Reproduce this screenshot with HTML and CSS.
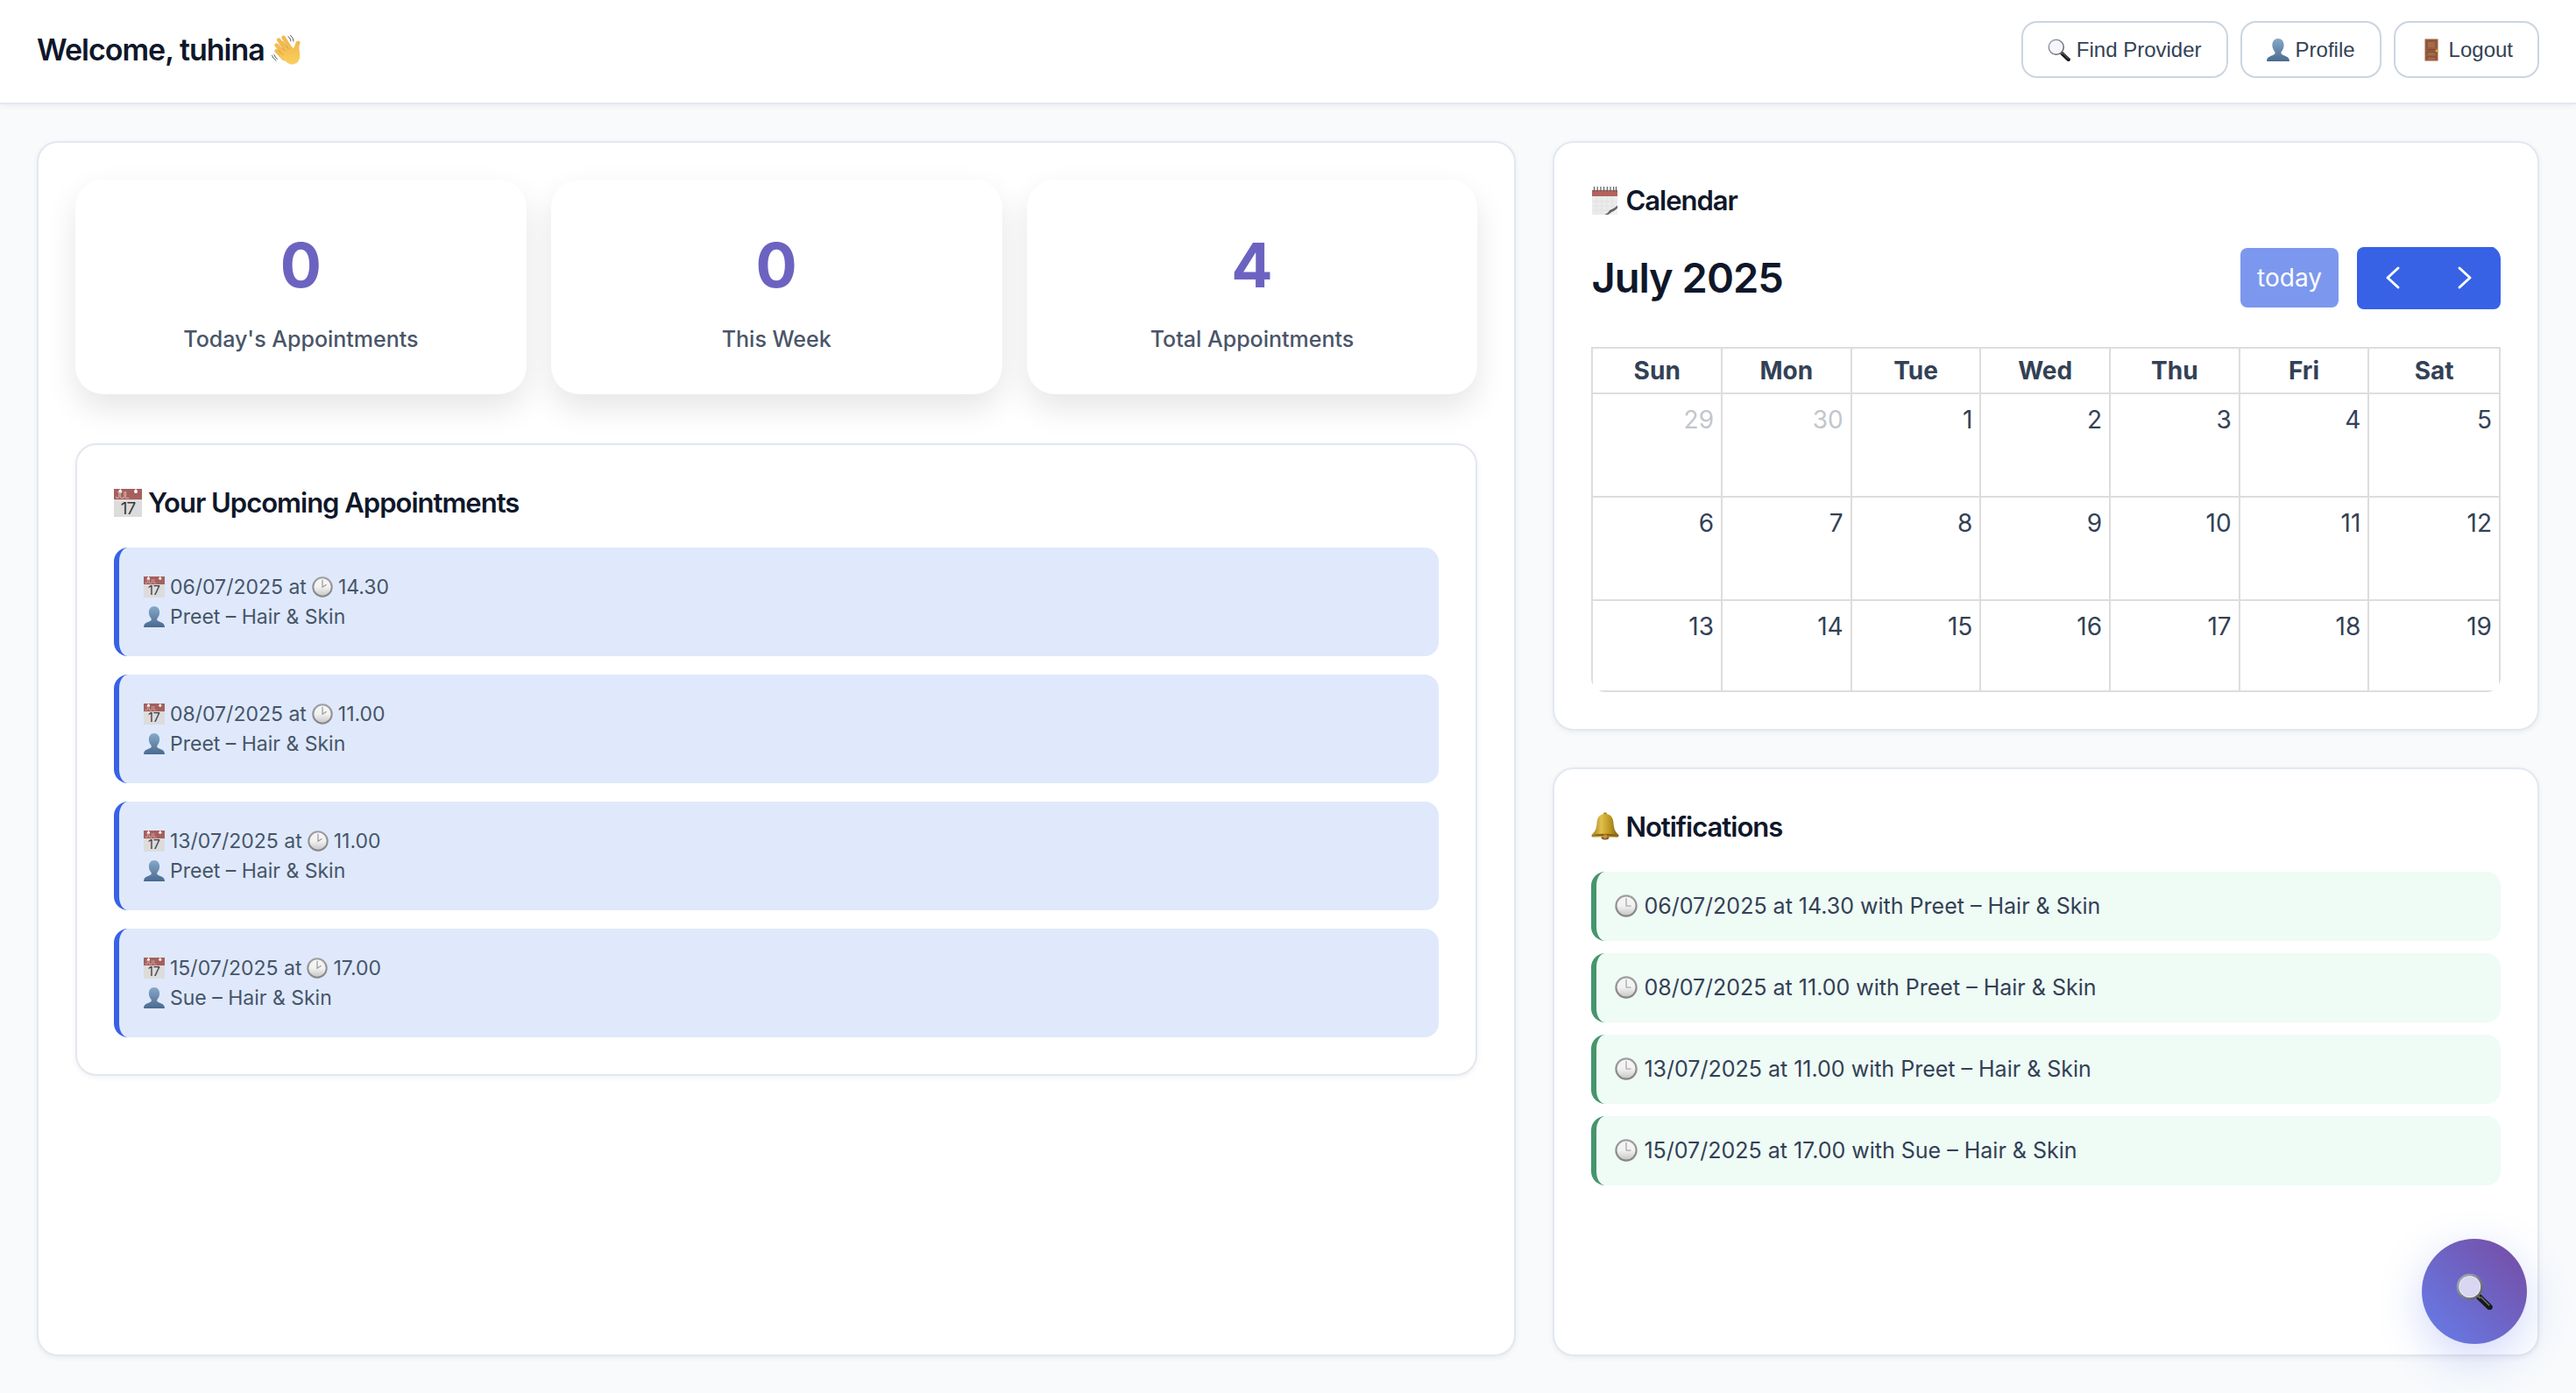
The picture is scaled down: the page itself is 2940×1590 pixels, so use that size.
FILE: index.html
```html
<!DOCTYPE html>
<html lang="en">
<head>
<meta charset="utf-8">
<meta name="viewport" content="width=device-width, initial-scale=1">
<title>Dashboard</title>
<link rel="stylesheet" href="styles.css">
</head>
<body>
<svg class="defs" aria-hidden="true">
  <defs>
    <linearGradient id="skin" x1="0" y1="0" x2="0" y2="1"><stop offset="0" stop-color="#f0b74c"/><stop offset="1" stop-color="#fbcf5e"/></linearGradient>
    <linearGradient id="person-fill" x1="0" y1="0" x2="0" y2="1"><stop offset="0" stop-color="#86a9c8"/><stop offset="1" stop-color="#4a6a90"/></linearGradient>
    <linearGradient id="bell-fill" x1="0" y1="0" x2="1" y2="0"><stop offset="0" stop-color="#9a7a1c"/><stop offset=".35" stop-color="#e3c04c"/><stop offset=".7" stop-color="#b8921f"/><stop offset="1" stop-color="#7d6010"/></linearGradient>
    <linearGradient id="clock-face" x1="0" y1="0" x2="0" y2="1"><stop offset="0" stop-color="#f6f6f6"/><stop offset=".5" stop-color="#f2f2f2"/><stop offset="1" stop-color="#c4c4c4"/></linearGradient>
    <linearGradient id="clock-rim" x1="0" y1="0" x2="0" y2="1"><stop offset="0" stop-color="#a0a0a0"/><stop offset="1" stop-color="#858585"/></linearGradient>
    <linearGradient id="rim" x1="0" y1="0" x2="1" y2="1"><stop offset="0" stop-color="#9fb0bf"/><stop offset="1" stop-color="#5b5b58"/></linearGradient>
    <symbol id="i-wave" viewBox="0 0 36 36">
      <g fill="none" stroke="#55585c" stroke-width="1" stroke-linecap="round"><path d="M20 2.500q2.500 2 3 5.500M22.500 1.200q3.300 2.800 3.600 6.800"/><path d="M1.500 24.500q1 3.200 4.600 5.800M3.800 23.600q.8 2.500 3.700 4.800"/></g>
      <g stroke="#f2bb4e" stroke-linecap="round" stroke-width="4.400" fill="none"><path d="M6.500 12.500 16 23"/><path d="M6.500 19 15 28"/><path d="M9 6.500 20 20"/><path d="M14.500 3.800 23 17"/></g>
      <path d="M12 16 20 12 26 16C28 14 27.500 10.500 29 8.700c1.500-1.500 4.600-1 4.600.6 0 2-1.600 3.700-1.200 7.200.4 3 1.500 7.500.4 11.500-1.400 5-6 7.300-10.300 6.300-3.600-.8-9.500-7-11.800-9.600z" fill="url(#skin)"/>
      <path d="M9.500 11.500 16.500 19.500M13.500 8 20.500 17M8.500 18 14.500 24" stroke="#cf8f35" stroke-width=".7" fill="none"/>
    </symbol>
    <symbol id="i-search" viewBox="0 0 40 40">
      <path d="m25.500 26.500 11 10.500" stroke="#17191a" stroke-width="6.500" stroke-linecap="round"/>
      <path d="m27.500 26.500 8.500 8.500" stroke="#686b6c" stroke-width="1.600" stroke-linecap="round"/>
      <path d="m23.500 24.500 3 3" stroke="#77736a" stroke-width="2"/>
      <circle cx="15" cy="15" r="13" fill="#f4f2fb" fill-opacity=".8" stroke="url(#rim)" stroke-width="2.600"/>
      <circle cx="15" cy="15" r="11.400" fill="none" stroke="#fff" stroke-opacity=".5"/>
    </symbol>
    <symbol id="i-person" viewBox="0 0 26 26">
      <path d="M13 0c4 0 6.600 3 6.600 7.500 0 3-1.200 5.500-2.600 7.200-.5.600-.7 1.300-.5 2.200.6 2.500 8.700 2.700 9.300 7.400.1.600.1 1.100.1 1.700H.1c0-.6 0-1.100.1-1.700.6-4.700 8.700-4.900 9.300-7.400.2-.9 0-1.600-.5-2.200C7.600 13 6.400 10.500 6.400 7.500 6.400 3 9 0 13 0z" fill="url(#person-fill)"/>
    </symbol>
    <symbol id="i-door" viewBox="0 0 26 26">
      <rect x="5.500" y=".5" width="15" height="25" fill="#9a5f40"/>
      <g fill="#7e4a2f"><rect x="7.500" y="2.500" width="11" height="8"/><rect x="7.500" y="12" width="11" height="1.500"/><rect x="7.500" y="15" width="11" height="4"/><rect x="7.500" y="20.500" width="11" height="3.500"/></g>
      <g fill="#a46a49"><rect x="8.500" y="3.500" width="9" height="7"/><rect x="8.500" y="16" width="9" height="3"/><rect x="8.500" y="21.500" width="9" height="2.500"/></g>
      <circle cx="19" cy="14" r="1.400" fill="#d8b43a"/>
    </symbol>
    <symbol id="i-date" viewBox="0 0 32 32">
      <rect width="32" height="32" fill="#dcdcdc"/>
      <rect width="32" height="12.500" fill="#a5605e"/>
      <rect y="12.500" width="32" height="1" fill="#efefef"/>
      <circle cx="7.300" cy="3" r="2" fill="#fff"/><circle cx="25" cy="3" r="2" fill="#fff"/>
      <path d="M7.300 0v3M25 0v3" stroke="#fff"/>
      <text x="2" y="11" class="date-month">JUL</text>
      <text x="16" y="28.500" text-anchor="middle" class="date-day">17</text>
    </symbol>
    <symbol id="i-pad" viewBox="0 0 32 32">
      <rect x="1" y="3" width="29" height="29" fill="#ececec"/>
      <rect x="1" y="4" width="29" height="7" fill="#b4625e"/>
      <path d="M1 17h29M1 22h29M1 27h29M6 11v21M12 11v21M18 11v21M24 11v21" stroke="#e0e0e0" stroke-width=".7"/>
      <path d="M3.500 0v6M7.200 0v6M10.900 0v6M14.600 0v6M18.300 0v6M22 0v6M25.700 0v6M28.500 0v6" stroke="#606266" stroke-width="1.200"/>
      <path d="M15 32c3.500-1 5-3 6-5 3-1 6.500-3 9-5.500v10.500z" fill="#f1f1f1"/>
      <path d="M15 32c3.500-1 5-3 6-5 3-1 6.500-3 9-5.500v3c-2.500 2.500-5 4-7 4.800-1 1.200-2.500 2.200-4 2.700z" fill="#636363"/>
    </symbol>
    <symbol id="i-clock" viewBox="0 0 26 26">
      <circle cx="13" cy="13" r="11.600" fill="url(#clock-face)" stroke="url(#clock-rim)" stroke-width="2.200"/>
      <path d="M13 4v9.200M13 13.200h5.500" stroke="#a8a8a8" stroke-width="1.300" fill="none"/>
    </symbol>
    <symbol id="i-clock-two" viewBox="0 0 26 26">
      <circle cx="13" cy="13" r="11.600" fill="url(#clock-face)" stroke="url(#clock-rim)" stroke-width="2.200"/>
      <path d="M13 4v9.200l5-3.200" stroke="#989898" stroke-width="1.300" fill="none"/>
    </symbol>
    <symbol id="i-bell" viewBox="0 0 32 32">
      <circle cx="16" cy="2.500" r="2.200" fill="#a98623"/>
      <ellipse cx="16" cy="28.500" rx="4.500" ry="3" fill="#7c4f16"/>
      <path d="M16 2c6 0 9 4 9.500 10.500.5 6 1.500 9.500 5.500 13 1 1.300.6 2.500-.8 2.900H1.800C.4 28 0 26.800 1 25.500c4-3.500 5-7 5.500-13C7 6 10 2 16 2z" fill="url(#bell-fill)"/>
      <path d="M2.500 26.200c4-2 23-2 27 0-4 1.600-23 1.600-27 0z" fill="#8a5f1a"/>
      <circle cx="16" cy="28" r="2.400" fill="#c68f3a"/>
    </symbol>
  </defs>
</svg>

<header class="topbar">
  <h1 class="welcome">Welcome, tuhina <svg class="icon icon-wave"><use href="#i-wave"/></svg></h1>
  <nav class="actions">
    <button type="button" class="btn"><svg class="icon"><use href="#i-search"/></svg>Find Provider</button>
    <button type="button" class="btn"><svg class="icon"><use href="#i-person"/></svg>Profile</button>
    <button type="button" class="btn"><svg class="icon"><use href="#i-door"/></svg>Logout</button>
  </nav>
</header>

<main class="dashboard">
  <section class="panel overview">
    <div class="stats">
      <div class="stat"><div class="stat-value">0</div><div class="stat-label">Today's Appointments</div></div>
      <div class="stat"><div class="stat-value">0</div><div class="stat-label">This Week</div></div>
      <div class="stat"><div class="stat-value">4</div><div class="stat-label">Total Appointments</div></div>
    </div>
    <section class="panel">
      <h2 class="heading"><svg class="icon"><use href="#i-date"/></svg>Your Upcoming Appointments</h2>
      <ul class="appointments">
        <li class="appointment">
          <div class="line"><svg class="icon"><use href="#i-date"/></svg>06/07/2025 at <svg class="icon"><use href="#i-clock-two"/></svg>14.30</div>
          <div class="line"><svg class="icon"><use href="#i-person"/></svg>Preet – Hair &amp; Skin</div>
        </li>
        <li class="appointment">
          <div class="line"><svg class="icon"><use href="#i-date"/></svg>08/07/2025 at <svg class="icon"><use href="#i-clock-two"/></svg>11.00</div>
          <div class="line"><svg class="icon"><use href="#i-person"/></svg>Preet – Hair &amp; Skin</div>
        </li>
        <li class="appointment">
          <div class="line"><svg class="icon"><use href="#i-date"/></svg>13/07/2025 at <svg class="icon"><use href="#i-clock-two"/></svg>11.00</div>
          <div class="line"><svg class="icon"><use href="#i-person"/></svg>Preet – Hair &amp; Skin</div>
        </li>
        <li class="appointment">
          <div class="line"><svg class="icon"><use href="#i-date"/></svg>15/07/2025 at <svg class="icon"><use href="#i-clock-two"/></svg>17.00</div>
          <div class="line"><svg class="icon"><use href="#i-person"/></svg>Sue – Hair &amp; Skin</div>
        </li>
      </ul>
    </section>
  </section>

  <section class="panel calendar-panel">
    <h2 class="heading"><svg class="icon"><use href="#i-pad"/></svg>Calendar</h2>
    <div class="calendar">
      <div class="calendar-toolbar">
        <h2 class="calendar-title">July 2025</h2>
        <button type="button" class="cal-btn today" disabled>today</button>
        <div class="cal-group">
          <button type="button" class="cal-btn step" aria-label="Previous month"><svg class="chevron" viewBox="0 0 28 28"><path d="M20 3 8 14l12 11"/></svg></button>
          <button type="button" class="cal-btn step" aria-label="Next month"><svg class="chevron" viewBox="0 0 28 28"><path d="m8 3 12 11L8 25"/></svg></button>
        </div>
      </div>
      <div class="calendar-view">
        <table class="month">
          <thead><tr><th scope="col">Sun</th><th scope="col">Mon</th><th scope="col">Tue</th><th scope="col">Wed</th><th scope="col">Thu</th><th scope="col">Fri</th><th scope="col">Sat</th></tr></thead>
          <tbody>
            <tr><td class="other">29</td><td class="other">30</td><td>1</td><td>2</td><td>3</td><td>4</td><td>5</td></tr>
            <tr><td>6</td><td>7</td><td>8</td><td>9</td><td>10</td><td>11</td><td>12</td></tr>
            <tr><td>13</td><td>14</td><td>15</td><td>16</td><td>17</td><td>18</td><td>19</td></tr>
          </tbody>
        </table>
      </div>
    </div>
  </section>

  <section class="panel">
    <h2 class="heading"><svg class="icon"><use href="#i-bell"/></svg>Notifications</h2>
    <ul class="notifications">
      <li class="notification"><svg class="icon"><use href="#i-clock"/></svg>06/07/2025 at 14.30 with Preet – Hair &amp; Skin</li>
      <li class="notification"><svg class="icon"><use href="#i-clock"/></svg>08/07/2025 at 11.00 with Preet – Hair &amp; Skin</li>
      <li class="notification"><svg class="icon"><use href="#i-clock"/></svg>13/07/2025 at 11.00 with Preet – Hair &amp; Skin</li>
      <li class="notification"><svg class="icon"><use href="#i-clock"/></svg>15/07/2025 at 17.00 with Sue – Hair &amp; Skin</li>
    </ul>
  </section>
</main>

<button type="button" class="fab" aria-label="Find provider"><svg class="fab-icon"><use href="#i-search"/></svg></button>
</body>
</html>
```
FILE: styles.css
```css
* {
  box-sizing: border-box;
  margin: 0;
  padding: 0;
}

body {
  display: flex;
  flex-direction: column;
  min-height: 100vh;
  background: #f8fafc;
  color: #334155;
  font-family: Inter, "Liberation Sans", sans-serif;
  font-size: 28px;
}

ul {
  list-style: none;
}

.defs {
  position: absolute;
  width: 0;
  height: 0;
}

.icon {
  flex: none;
  width: 24px;
  height: 24px;
}

.date-month {
  font: 10px "Liberation Sans", sans-serif;
  fill: #d9b5b3;
}

.date-day {
  font: 19px Inter, sans-serif;
  fill: #3a3a3a;
}

/* Top bar */
.topbar {
  display: flex;
  align-items: center;
  justify-content: space-between;
  padding: 24px 42px 28px;
  background: #fff;
  border-bottom: 2px solid #e2e8f0;
  box-shadow: 0 2px 6px rgba(0, 0, 0, 0.06);
}

.welcome {
  display: flex;
  align-items: center;
  gap: 7px;
  color: #0f172a;
  font-size: 34px;
  font-weight: 600;
  line-height: 56px;
  letter-spacing: -1px;
}

.icon-wave {
  width: 36px;
  height: 36px;
}

.actions {
  display: flex;
  gap: 14px;
}

.btn {
  display: flex;
  align-items: center;
  gap: 7px;
  height: 65px;
  padding: 0 28px;
  background: #fff;
  border: 2px solid #cbd5e1;
  border-radius: 18px;
  color: #334155;
  font-family: "Liberation Sans", Arial, sans-serif;
  font-size: 24px;
}

/* Page grid */
.dashboard {
  flex: 1;
  display: grid;
  grid-template-columns: minmax(0, 3fr) minmax(0, 2fr);
  grid-template-rows: 1fr 1fr;
  gap: 42px;
  padding: 42px;
}

.panel {
  padding: 42px;
  background: #fff;
  border: 2px solid #e2e8f0;
  border-radius: 24px;
  box-shadow: 0 2px 6px rgba(0, 0, 0, 0.06);
}

.overview {
  grid-row: span 2;
}

.heading {
  display: flex;
  align-items: center;
  gap: 7px;
  margin-bottom: 28px;
  color: #0f172a;
  font-size: 31px;
  font-weight: 600;
  line-height: 47px;
  letter-spacing: -1px;
}

.heading .icon {
  width: 32px;
  height: 32px;
}

/* Statistics */
.stats {
  display: grid;
  grid-template-columns: repeat(3, 1fr);
  gap: 28px;
  margin-bottom: 56px;
}

.stat {
  padding: 42px;
  background: #fff;
  border-radius: 32px;
  box-shadow: 0 16px 36px rgba(0, 0, 0, 0.1);
  text-align: center;
}

.stat-value {
  margin-bottom: 7px;
  color: #6c63c1;
  font-size: 70px;
  font-weight: 700;
  line-height: 112px;
}

.stat-label {
  color: #4a5568;
  font-size: 25px;
  font-weight: 500;
  line-height: 42px;
}

/* Appointments */
.appointments {
  display: grid;
  gap: 21px;
}

.appointment {
  padding: 28px;
  background: #dfe9fb;
  border-left: 6px solid #3762e6;
  border-radius: 16px;
  color: #475569;
  font-size: 23px;
  line-height: 34px;
}

.line {
  display: flex;
  align-items: center;
  gap: 6px;
}

/* Calendar */
.calendar-panel {
  display: flex;
  flex-direction: column;
}

.calendar {
  flex: 1;
  display: flex;
  flex-direction: column;
  border-radius: 16px;
  overflow: hidden;
}

.calendar-toolbar {
  display: flex;
  align-items: center;
  gap: 21px;
  margin-bottom: 42px;
}

.calendar-title {
  margin-right: auto;
  color: #0f172a;
  font-size: 47px;
  font-weight: 600;
  line-height: 74px;
  letter-spacing: -1px;
}

.cal-btn {
  background: #3762e6;
  border: 0;
  border-radius: 8px;
  color: #fff;
  font-family: inherit;
  font-size: 28px;
}

.today {
  height: 68px;
  padding: 0 19px;
  opacity: 0.65;
}

.cal-group {
  display: flex;
}

.step {
  display: grid;
  place-items: center;
  width: 82px;
  height: 71px;
}

.step:first-child {
  border-radius: 8px 0 0 8px;
}

.step:last-child {
  border-radius: 0 8px 8px 0;
}

.chevron {
  width: 28px;
  height: 28px;
  fill: none;
  stroke: #fff;
  stroke-width: 3;
  stroke-linecap: round;
  stroke-linejoin: round;
}

.calendar-view {
  flex: 1 1 0;
  min-height: 300px;
  border: 2px solid #ddd;
  overflow: hidden;
}

.month {
  width: 100%;
  table-layout: fixed;
  border-spacing: 0;
}

.month th,
.month td {
  border-right: 2px solid #ddd;
  border-bottom: 2px solid #ddd;
  line-height: 42px;
}

.month th:last-child,
.month td:last-child {
  border-right: 0;
}

.month th {
  height: 52px;
  font-weight: 700;
}

.month td {
  height: 118px;
  padding: 8px;
  text-align: right;
  vertical-align: top;
}

.month .other {
  color: #c2c6cc;
}

/* Notifications */
.notifications {
  display: grid;
  gap: 14px;
}

.notification {
  display: flex;
  align-items: center;
  gap: 7px;
  min-height: 79px;
  padding: 18px 21px;
  background: #effbf5;
  border-left: 6px solid #45956d;
  border-radius: 16px;
  font-size: 25px;
  line-height: 42px;
}

.notification .icon,
.btn .icon {
  width: 26px;
  height: 26px;
}

/* Floating search button */
.fab {
  position: fixed;
  right: 56px;
  bottom: 56px;
  display: grid;
  place-items: center;
  width: 120px;
  height: 120px;
  background: linear-gradient(45deg, #667eea, #764ba2);
  border: 0;
  border-radius: 50%;
  box-shadow: 0 16px 50px rgba(102, 126, 234, 0.3);
}

.fab-icon {
  width: 42px;
  height: 42px;
}
```
